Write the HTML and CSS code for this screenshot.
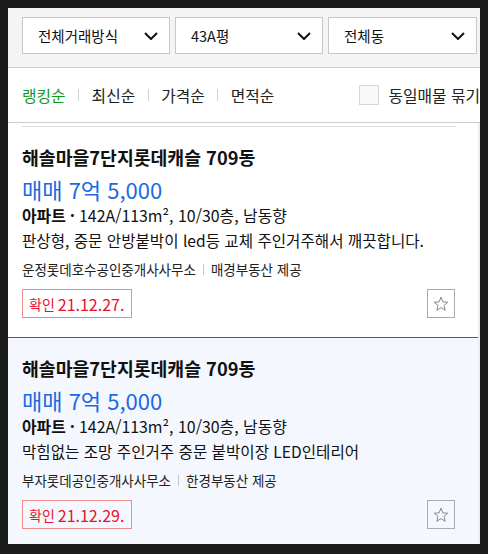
FILE: index.html
```html
<!DOCTYPE html>
<html lang="ko">
<head>
<meta charset="utf-8">
<link rel="stylesheet" href="styles.css">
</head>
<body>
<div class="panel">
  <div class="filters">
    <div class="select w148"><span>전체거래방식</span><svg class="chev" width="14" height="8" viewBox="0 0 14 8"><polyline points="1,1 7,7 13,1"/></svg></div>
    <div class="select w148"><span>43A평</span><svg class="chev" width="14" height="8" viewBox="0 0 14 8"><polyline points="1,1 7,7 13,1"/></svg></div>
    <div class="select w149"><span>전체동</span><svg class="chev" width="14" height="8" viewBox="0 0 14 8"><polyline points="1,1 7,7 13,1"/></svg></div>
  </div>
  <div class="sort">
    <span class="sort-item active">랭킹순</span><span class="sep"></span>
    <span class="sort-item">최신순</span><span class="sep"></span>
    <span class="sort-item">가격순</span><span class="sep"></span>
    <span class="sort-item">면적순</span>
    <label class="same"><span class="box"></span><span>동일매물 묶기</span></label>
  </div>
  <div class="list">
    <div class="rule"></div>
    <div class="card">
      <div class="title">해솔마을7단지롯데캐슬 709동</div>
      <div class="price">매매 7억 5,000</div>
      <div class="spec"><b>아파트</b><b class="dot">·</b>142A/113m², 10/30층, 남동향</div>
      <div class="desc">판상형, 중문 안방붙박이 led등 교체 주인거주해서 깨끗합니다.</div>
      <div class="agent">운정롯데호수공인중개사사무소<span class="bar"></span>매경부동산 제공</div>
      <div class="bottom">
        <span class="badge"><span class="lbl">확인</span><span class="date">21.12.27.</span></span>
        <span class="star"><svg width="16" height="16" viewBox="0 0 16 16"><polygon points="8,1.2 9.9,5.9 14.8,6.2 11,9.4 12.2,14.3 8,11.6 3.8,14.3 5,9.4 1.2,6.2 6.1,5.9"/></svg></span>
      </div>
    </div>
    <div class="card selected">
      <div class="title">해솔마을7단지롯데캐슬 709동</div>
      <div class="price">매매 7억 5,000</div>
      <div class="spec"><b>아파트</b><b class="dot">·</b>142A/113m², 10/30층, 남동향</div>
      <div class="desc">막힘없는 조망 주인거주 중문 붙박이장 LED인테리어</div>
      <div class="agent">부자롯데공인중개사사무소<span class="bar"></span>한경부동산 제공</div>
      <div class="bottom">
        <span class="badge"><span class="lbl">확인</span><span class="date">21.12.29.</span></span>
        <span class="star"><svg width="16" height="16" viewBox="0 0 16 16"><polygon points="8,1.2 9.9,5.9 14.8,6.2 11,9.4 12.2,14.3 8,11.6 3.8,14.3 5,9.4 1.2,6.2 6.1,5.9"/></svg></span>
      </div>
    </div>
  </div>
</div>
</body>
</html>
```
FILE: styles.css
```css
html { background: #1b1b1b; }
body {
  margin: 8px;
  font-family: "Noto Sans CJK KR", "Noto Sans", sans-serif;
  color: #111;
}
.panel {
  width: 472px;
  height: 536px;
  overflow: hidden;
  background: #fff;
}
.filters {
  background: #f4f4f4;
  border-bottom: 1px solid #cdcdcd;
  padding: 9px 0 13px 14px;
  display: flex;
  gap: 5px;
}
.select {
  box-sizing: border-box;
  height: 37px;
  border: 1px solid #c8c8c8;
  background: #fff;
  display: flex;
  align-items: center;
  justify-content: space-between;
  padding: 0 11px 0 15px;
  font-size: 14.5px;
  color: #111;
}
.w148 { width: 148px; }
.w149 { width: 149px; }
.chev polyline {
  fill: none;
  stroke: #111;
  stroke-width: 2;
}
.sort {
  height: 54px;
  border-bottom: 1px solid #cdcdcd;
  display: flex;
  align-items: center;
  padding-left: 14px;
  font-size: 15.8px;
  white-space: nowrap;
  color: #222;
}
.sort-item.active { color: #0c9a1c; }
.sep {
  width: 1px;
  height: 12px;
  background: #d0d0d0;
  margin: 0 12.5px;
}
.same {
  display: flex;
  align-items: center;
  gap: 9px;
  margin-left: 85px;
  flex-shrink: 0;
}
.box {
  box-sizing: border-box;
  width: 20px;
  height: 20px;
  border: 1px solid #d6d6d6;
  background: #f9f9f9;
}
.list {
  border-right: 2px solid #ededed;
  padding-top: 3px;
}
.rule {
  height: 1px;
  background: #dcdcdc;
  margin: 0 22px 0 14px;
}
.card {
  padding: 18px 14px 19px;
}
.card.selected {
  background: #f4f8fe;
  border-top: 1px solid #1f62c4;
}
.title {
  font-size: 18.3px;
  font-weight: 700;
  line-height: 24px;
  color: #111;
}
.price {
  font-size: 22px;
  line-height: 28px;
  margin: 6px 0 1px;
  color: #1a6ae2;
}
.spec {
  font-size: 15.9px;
  line-height: 24px;
  color: #111;
}
.desc {
  font-size: 15.6px;
  line-height: 24px;
  color: #111;
}
.spec b { font-weight: 700; }
.dot { margin: 0 4px; }
.agent {
  font-size: 13.5px;
  line-height: 20px;
  margin-top: 7px;
  display: flex;
  align-items: center;
  color: #222;
}
.bar {
  width: 1px;
  height: 11px;
  background: #c8c8c8;
  margin: 0 7px;
}
.bottom {
  margin-top: 10px;
  display: flex;
  justify-content: space-between;
  align-items: flex-start;
  padding-right: 9px;
}
.badge {
  box-sizing: border-box;
  height: 29px;
  border: 1px solid #f08c8c;
  display: flex;
  align-items: center;
  padding: 0 7px 0 6px;
  color: #e8112d;
}
.badge .lbl { font-size: 14px; margin-right: 3px; }
.badge .date { font-size: 16px; }
.star {
  box-sizing: border-box;
  width: 28px;
  height: 29px;
  border: 1px solid #ababab;
  display: flex;
  align-items: center;
  justify-content: center;
}
.star polygon {
  fill: none;
  stroke: #888;
  stroke-width: 1;
  stroke-linejoin: round;
}
```
